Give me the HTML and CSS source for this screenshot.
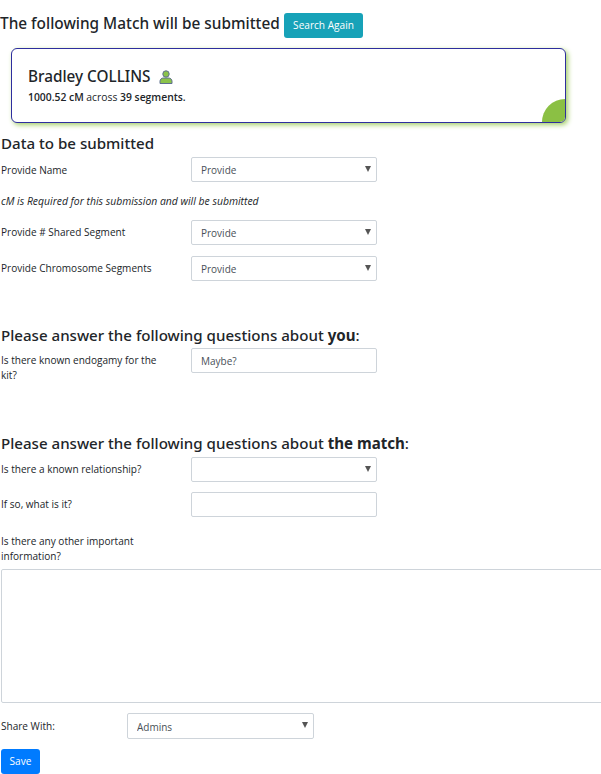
FILE: index.html
```html
<!DOCTYPE html>
<html lang="en">
<head>
<meta charset="UTF-8">
<title>Submit Match</title>
<link rel="stylesheet" href="styles.css">
</head>
<body>
<div class="page">
  <div class="title-row">
    <h2 class="title">The following Match will be submitted</h2>
    <a class="btn btn-info">Search Again</a>
  </div>

  <div class="match-card">
    <div class="match-name">Bradley COLLINS
      <svg class="person" width="14" height="14" viewBox="0 0 14 14">
        <circle cx="7" cy="4" r="3.2" fill="#8bc34a" stroke="#5f6f90" stroke-width="1"/>
        <path d="M1 13.5v-2.2c0-2 1.6-3.3 3.4-3.3h5.2c1.8 0 3.4 1.3 3.4 3.3v2.2z" fill="#8bc34a" stroke="#5f6f90" stroke-width="1"/>
      </svg>
    </div>
    <div class="match-info"><b>1000.52 cM</b> across <b>39 segments.</b></div>
    <span class="corner"></span>
  </div>

  <h3 class="section first">Data to be submitted</h3>
  <div class="row row-name">
    <label class="lbl lbl-name">Provide Name</label>
    <select class="field pick"><option>Provide</option></select>
  </div>
  <p class="note">cM is Required for this submission and will be submitted</p>
  <div class="row row-shared">
    <label class="lbl">Provide # Shared Segment</label>
    <select class="field pick"><option>Provide</option></select>
  </div>
  <div class="row row-chromo">
    <label class="lbl">Provide Chromosome Segments</label>
    <select class="field pick"><option>Provide</option></select>
  </div>

  <h3 class="section you">Please answer the following questions about <b>you</b>:</h3>
  <div class="row row-top">
    <label class="lbl">Is there known endogamy for the kit?</label>
    <input class="field" type="text" value="Maybe?">
  </div>

  <h3 class="section match">Please answer the following questions about <b>the match</b>:</h3>
  <div class="row row-rel">
    <label class="lbl">Is there a known relationship?</label>
    <select class="field pick"><option></option></select>
  </div>
  <div class="row row-what">
    <label class="lbl">If so, what is it?</label>
    <input class="field" type="text">
  </div>
  <label class="lbl lbl-other">Is there any other important information?</label>
  <textarea class="other"></textarea>
  <div class="row row-share">
    <label class="lbl lbl-share">Share With:</label>
    <select class="field pick field-share"><option>Admins</option></select>
  </div>
  <a class="btn btn-save">Save</a>
</div>
</body>
</html>
```

FILE: styles.css
```css
html, body {
  overflow: hidden;
}

body {
  margin: 0;
  background: #fff;
  color: #212529;
  font-family: "Open Sans", "Noto Sans", sans-serif;
  font-size: 10px;
}

.page {
  width: 620px;
  padding-left: 1px;
}

.title-row {
  display: flex;
  align-items: flex-start;
  padding-top: 13px;
  margin-left: -1px;
}

.title {
  width: 284px;
  margin: 0;
  font-family: "Noto Sans", sans-serif;
  font-size: 15.38px;
  font-weight: 500;
  line-height: 21px;
  white-space: nowrap;
}

.btn {
  display: inline-block;
  box-sizing: border-box;
  border-radius: 3px;
  color: #fff;
  font-size: 10.1px;
  text-align: center;
}

.btn-info {
  width: 79px;
  height: 25px;
  line-height: 25px;
  background: #17a2b8;
}

.btn-save {
  width: 39px;
  height: 25px;
  line-height: 25px;
  background: #007bff;
}

.match-card {
  position: relative;
  box-sizing: border-box;
  width: 555px;
  height: 75px;
  margin: 10px 0 0 10px;
  padding: 16px 16px 0;
  border: 1px solid #2e2e9e;
  border-radius: 6px;
  background: #fff;
  box-shadow: 2px 2px 5px #a5cf6a;
  overflow: hidden;
}

.match-name {
  font-family: "Noto Sans", sans-serif;
  font-size: 15.3px;
  font-weight: 500;
  line-height: 22px;
}

.person {
  margin-left: 5px;
  vertical-align: -2px;
}

.match-info {
  margin-top: 3px;
  font-size: 10.35px;
  line-height: 14px;
}

.match-info b {
  font-weight: 600;
}

.corner {
  position: absolute;
  right: 0;
  bottom: 0;
  width: 23px;
  height: 23px;
  border-top-left-radius: 23px;
  background: #8bc044;
}

.section {
  margin: 0;
  font-family: "Noto Sans", sans-serif;
  font-size: 15.1px;
  font-weight: 500;
  line-height: 20px;
}

.section b {
  font-weight: 700;
}

.first {
  margin-top: 10px;
}

.row {
  display: flex;
  align-items: center;
}

.lbl {
  display: block;
  flex: none;
  width: 190px;
  box-sizing: border-box;
  padding-right: 30px;
  font-size: 10.05px;
  line-height: 15px;
}

.lbl-name {
  padding-top: 1px;
}

.field {
  box-sizing: border-box;
  width: 186px;
  height: 25px;
  padding: 0 9px;
  border: 1px solid #ced4da;
  border-radius: 2px;
  background: #fff;
  color: #495057;
  font-family: inherit;
  font-size: 10px;
}

/* flat select with the small solid arrow */
.pick {
  appearance: none;
  background: #fff url("data:image/svg+xml,%3Csvg xmlns='http://www.w3.org/2000/svg' width='6' height='6'%3E%3Cpath d='M0 0h6L3 6z' fill='%23555'/%3E%3C/svg%3E") no-repeat right 5px top 8px;
}

.note {
  margin: 12px 0 0;
  font-size: 10.4px;
  font-style: italic;
  line-height: 14px;
}

.row-name { margin-top: 4px; }
.row-shared { margin-top: 12px; }
.row-chromo { margin-top: 11px; }

.you { margin-top: 44px; }
.row-top { align-items: flex-start; margin-top: 3px; }
.row-top .lbl { padding-top: 5px; }

.match { margin-top: 50px; }
.row-rel { margin-top: 4px; }
.row-what { margin-top: 10px; }

.lbl-other {
  width: 160px;
  padding-right: 0;
  margin-top: 17px;
}

.other {
  display: block;
  box-sizing: border-box;
  width: 620px;
  height: 134px;
  margin-top: 5px;
  border: 1px solid #ced4da;
  border-radius: 2px;
}

.row-share { margin-top: 10px; }
.lbl-share { width: 126px; }
.field-share { width: 187px; height: 26px; padding-top: 1px; }

.btn-save { margin-top: 10px; }
```
